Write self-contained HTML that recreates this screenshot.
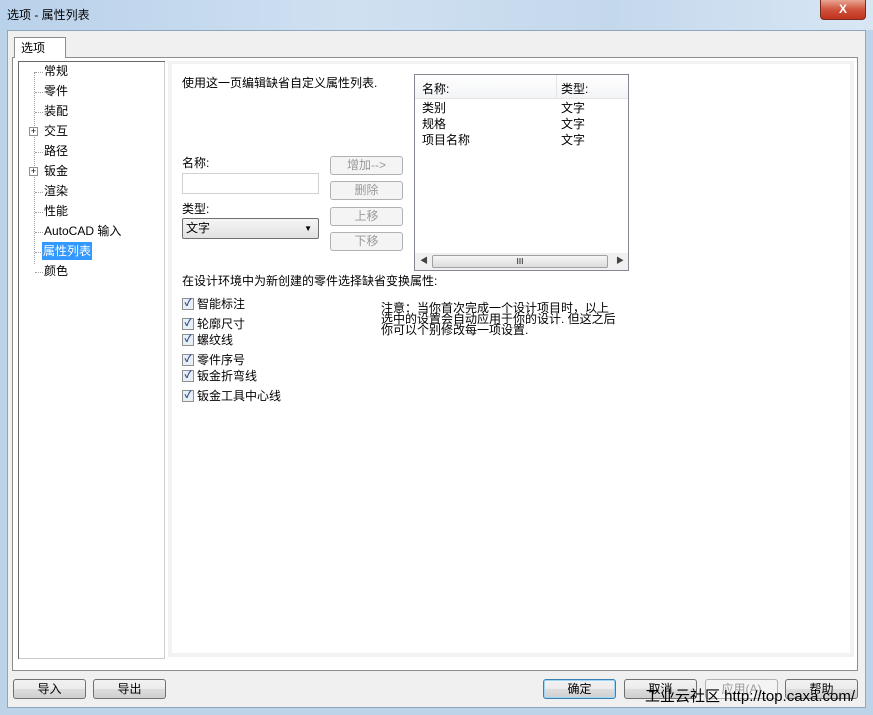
<!DOCTYPE html>
<html><head><meta charset="utf-8"><style>
*{margin:0;padding:0;box-sizing:border-box}
body{width:873px;height:715px;overflow:hidden;position:relative;background:#bcd3e8;font-family:"Liberation Sans","Noto Sans CJK SC",sans-serif;font-size:12px;color:#000}
.a{position:absolute}
.title{left:0;top:0;width:873px;height:30px;background:linear-gradient(90deg,#b9d1ea,#cfe0f1 40%,#c4d8ec 70%,#d8e6f4)}
.client{left:7px;top:30px;width:859px;height:678px;background:#f0f0f0;border:1px solid #8fa6bf}
.btn{position:absolute;height:20px;border:1px solid #707070;border-radius:3px;background:linear-gradient(#f2f2f2,#ebebeb 50%,#dddddd 51%,#cfcfcf);text-align:center;line-height:18px;font-size:12px}
.dis{border-color:#adb2b5;color:#9a9a9a;background:#f4f4f4}
.tree div{position:absolute;left:25px;height:18px;line-height:18px;font-size:12px}
.dot{position:absolute;border-top:1px dotted #a0a0a0;width:8px}
.cb{position:absolute;left:182px;width:12px;height:12px;border:1px solid #8e8f8f;background:#e8eef5;font-size:10px;line-height:10px;text-align:center;color:#2a4d8e;font-weight:bold}
.cl{position:absolute;left:197px;font-size:12px;line-height:14px}
</style></head><body>
<div class="a title"></div>
<div class="a" style="left:7px;top:6px;font-size:12px">选项 - 属性列表</div>
<div class="a" style="left:820px;top:0;width:46px;height:20px;border:1px solid #7a2a20;border-top:none;border-radius:0 0 4px 4px;background:linear-gradient(#e8a593,#d0533d 50%,#c0321c);color:#fff;text-align:center;font-weight:bold;font-size:12px;line-height:18px">X</div>
<div class="a client"></div>
<!-- tab -->
<div class="a" style="left:12px;top:57px;width:846px;height:614px;border:1px solid #8d8d8d;background:#fff"></div>
<div class="a" style="left:14px;top:37px;width:52px;height:21px;border:1px solid #8d8d8d;border-bottom:none;background:#fff;padding-left:6px;line-height:20px">选项</div>
<!-- tree -->
<div class="a" style="left:18px;top:61px;width:147px;height:598px;border:1px solid #828790;border-right-color:#ccc;border-bottom-color:#ccc;background:#fff"></div>
<div class="a" style="left:18px;top:61px;width:147px;height:2px;border-top:1px solid #696969"></div>
<div class="a" style="left:18px;top:61px;width:2px;height:598px;border-left:1px solid #696969"></div>
<div class="a" style="left:34px;top:72px;height:192px;border-left:1px dotted #a0a0a0"></div>
<div class="a tree" style="left:19px;top:62px;width:140px;height:230px">
<div style="top:0">常规</div><div style="top:20px">零件</div><div style="top:40px">装配</div><div style="top:60px">交互</div><div style="top:80px">路径</div><div style="top:100px">钣金</div><div style="top:120px">渲染</div><div style="top:140px">性能</div><div style="top:160px">AutoCAD 输入</div><div style="top:180px;background:#3399ff;color:#fff;padding:0 1px;left:23px">属性列表</div><div style="top:200px">颜色</div>
</div>
<div class="dot a" style="left:35px;top:72px"></div><div class="dot a" style="left:35px;top:92px"></div><div class="dot a" style="left:35px;top:112px"></div><div class="dot a" style="left:35px;top:152px"></div><div class="dot a" style="left:35px;top:192px"></div><div class="dot a" style="left:35px;top:212px"></div><div class="dot a" style="left:35px;top:232px"></div><div class="dot a" style="left:35px;top:252px"></div><div class="dot a" style="left:35px;top:272px"></div>
<div class="a" style="left:29px;top:127px;width:9px;height:9px;border:1px solid #919191;background:#fff;font-size:9px;line-height:7px;text-align:center">+</div>
<div class="a" style="left:29px;top:167px;width:9px;height:9px;border:1px solid #919191;background:#fff;font-size:9px;line-height:7px;text-align:center">+</div>
<!-- right panel -->
<div class="a" style="left:168px;top:61px;width:686px;height:596px;background:#f2f2f2"></div>
<div class="a" style="left:172px;top:64px;width:678px;height:589px;background:#fff"></div>
<div class="a" style="left:182px;top:74px">使用这一页编辑缺省自定义属性列表.</div>
<div class="a" style="left:182px;top:154px">名称:</div>
<div class="a" style="left:182px;top:173px;width:137px;height:21px;border:1px solid #d0d0d0;background:#fff"></div>
<div class="a" style="left:182px;top:200px">类型:</div>
<div class="a" style="left:182px;top:218px;width:137px;height:21px;border:1px solid #707070;border-radius:2px;background:linear-gradient(#f5f5f5,#e2e2e2);padding-left:3px;line-height:19px">文字<span style="position:absolute;right:6px;top:0;font-size:8px">▼</span></div>
<div class="btn dis" style="left:330px;top:156px;width:73px;height:19px;line-height:17px">增加--&gt;</div>
<div class="btn dis" style="left:330px;top:181px;width:73px;height:19px;line-height:17px">删除</div>
<div class="btn dis" style="left:330px;top:207px;width:73px;height:19px;line-height:17px">上移</div>
<div class="btn dis" style="left:330px;top:232px;width:73px;height:19px;line-height:17px">下移</div>
<div class="a" style="left:414px;top:74px;width:215px;height:197px;border:1px solid #828790;background:#fff"></div>
<div class="a" style="left:415px;top:75px;width:213px;height:24px;background:linear-gradient(#fff,#f3f4f6);border-bottom:1px solid #e5e5e5"></div>
<div class="a" style="left:556px;top:75px;height:24px;border-left:1px solid #e5e5e5"></div>
<div class="a" style="left:422px;top:80px">名称:</div><div class="a" style="left:561px;top:80px">类型:</div>
<div class="a" style="left:422px;top:100px;line-height:16px">类别<br>规格<br>项目名称</div>
<div class="a" style="left:561px;top:100px;line-height:16px">文字<br>文字<br>文字</div>
<div class="a" style="left:415px;top:253px;width:213px;height:17px;background:#f0f0f0"></div>
<div class="a" style="left:432px;top:255px;width:176px;height:13px;border:1px solid #a0a0a0;border-radius:2px;background:linear-gradient(#f6f6f6,#dcdcdc);text-align:center;font-size:8px;line-height:11px">III</div>
<div class="a" style="left:420px;top:255px;font-size:8px;color:#444">◀</div><div class="a" style="left:616px;top:255px;font-size:8px;color:#444">▶</div>
<div class="a" style="left:182px;top:272px">在设计环境中为新创建的零件选择缺省变换属性:</div>
<div class="cb" style="top:298px">✓</div><div class="cl" style="top:297px">智能标注</div>
<div class="cb" style="top:318px">✓</div><div class="cl" style="top:317px">轮廓尺寸</div>
<div class="cb" style="top:334px">✓</div><div class="cl" style="top:333px">螺纹线</div>
<div class="cb" style="top:354px">✓</div><div class="cl" style="top:353px">零件序号</div>
<div class="cb" style="top:370px">✓</div><div class="cl" style="top:369px">钣金折弯线</div>
<div class="cb" style="top:390px">✓</div><div class="cl" style="top:389px">钣金工具中心线</div>
<div class="a" style="left:381px;top:303px;line-height:11px;font-size:12px">注意：当你首次完成一个设计项目时，以上<br>选中的设置会自动应用于你的设计. 但这之后<br>你可以个别修改每一项设置.</div>
<!-- bottom buttons -->
<div class="btn" style="left:13px;top:679px;width:73px">导入</div>
<div class="btn" style="left:93px;top:679px;width:73px">导出</div>
<div class="btn" style="left:543px;top:679px;width:73px;border-color:#3c7fb1;box-shadow:inset 0 0 0 1px #9fd5f5">确定</div>
<div class="btn" style="left:624px;top:679px;width:73px">取消</div>
<div class="btn dis" style="left:705px;top:679px;width:73px">应用(A)</div>
<div class="btn" style="left:785px;top:679px;width:73px">帮助</div>
<div class="a" style="left:645px;top:688px;font-size:15px;line-height:17px;white-space:nowrap">工业云社区 http://top.caxa.com/</div>
</body></html>
